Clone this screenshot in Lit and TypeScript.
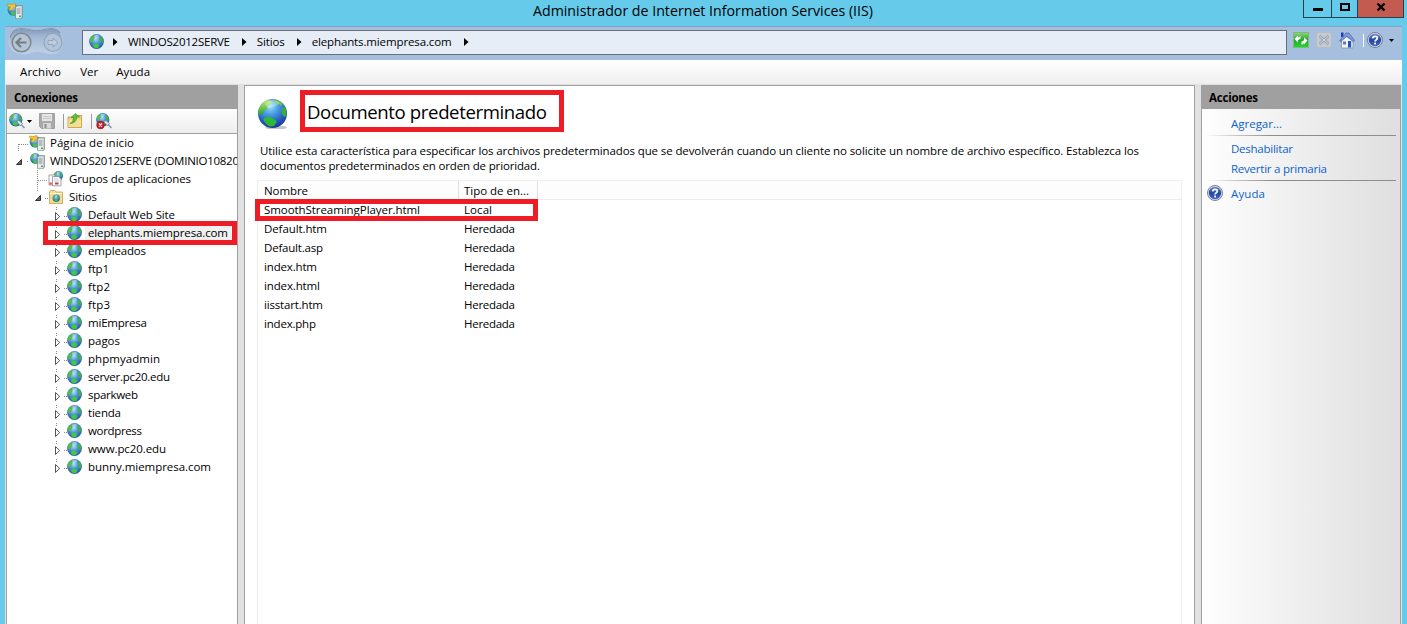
import { LitElement, html, svg, css } from "lit";
import { customElement, property } from "lit/decorators.js";

/** A single line of text spaced out to a given width. */
@customElement("fit-label")
class FitLabel extends LitElement {
  @property() text = "";
  @property({ type: Number }) w = 0;
  static styles = css`
    :host { display: block; flex: none; white-space: pre; }
    .t { display: inline-block; }
  `;
  firstUpdated() {
    const el = this.renderRoot.querySelector(".t") as HTMLElement;
    const natural = el.getBoundingClientRect().width;
    const n = this.text.length - 1;
    if (this.w && n > 0) el.style.letterSpacing = `${(this.w - natural) / n}px`;
  }
  render() {
    return html`<span class="t">${this.text}</span>`;
  }
}

const label = (text: string, w: number, cls = "") =>
  html`<fit-label class=${cls} .text=${text} .w=${w}></fit-label>`;

const globeDefs = svg`
  <defs>
    <radialGradient id="sea" cx=".42" cy=".25" r=".78">
      <stop offset="0" stop-color="#9ce2fa"/><stop offset=".35" stop-color="#4a9fe2"/>
      <stop offset=".75" stop-color="#2458bc"/><stop offset="1" stop-color="#1b3486"/>
    </radialGradient>
    <linearGradient id="land" x1="0" y1="0" x2="0" y2="1">
      <stop offset="0" stop-color="#c2ea70"/><stop offset="1" stop-color="#28a428"/>
    </linearGradient>
  </defs>`;
const globeArt = svg`${globeDefs}
  <ellipse cx="19" cy="29.500" rx="11" ry="2" fill="#000" opacity=".22"/>
  <circle cx="15.500" cy="15.500" r="14.500" fill="url(#sea)"/>
  <path d="M1.500 13Q3 5 10 2L14 3L15 6L11 7L10 11L7 13L4 17L1.500 17Z" fill="url(#land)"/>
  <path d="M17 1.500Q23 2 26 6L24 8L20 5L17 4Z" fill="#6cc04c"/>
  <path d="M25 10L28 9Q30 13 29.500 18L27 19L24.500 15Z" fill="#3aae3a"/>
  <path d="M6 21L11 18.500L15 20L20 23.500L17 28L13 28.500Q9 27 6 21Z" fill="#2fb833"/>
  <path d="M8 6Q15 -1 23 5Q18 10 10 10Z" fill="#fff" opacity=".3"/>`;

const smallGlobeArt = svg`
  <defs>
    <radialGradient id="sea2" cx=".45" cy=".35" r=".7">
      <stop offset="0" stop-color="#a6dcf8"/><stop offset=".45" stop-color="#4a90d8"/>
      <stop offset="1" stop-color="#2a4c9c"/>
    </radialGradient>
  </defs>
  <circle cx="7.500" cy="7.500" r="7.400" fill="url(#sea2)"/>
  <path d="M1 5Q2 2 5.500 .8L6.500 2L5 4L4.500 6.500L3 8.500L1.500 8Z" fill="#58bc48"/>
  <path d="M10 1Q13 2.500 14.300 6L13.500 9.500L11.500 8L10.500 5L11.500 3.500Z" fill="#3fb23e"/>
  <path d="M4 10.500L7 9.500L10.500 11L9 14L6.500 14.300L4.500 13Z" fill="#3dcc3a"/>
  <path d="M5 2Q7 0 10 1.500Q10 4 6 5Z" fill="#fff" opacity=".35"/>`;

const globe = (s: number) => html`<svg class="ic" width=${s} height=${s} viewBox="0 0 31 31">${globeArt}</svg>`;
const smallGlobe = html`<svg class="ic" width="15" height="15" viewBox="0 0 15 15">${smallGlobeArt}</svg>`;

const serverArt = svg`
  <path d="M8.500 4L10.500 2.500H15.500V14L14.500 15.500H8.500Z" fill="#c6cbcf" stroke="#7f868b" stroke-width=".7"/>
  <path d="M9 4.300H14V15.200H9Z" fill="#e9ecee"/>
  <path d="M9.500 6H13.500M9.500 8H13.500M9.500 10H13.500" stroke="#777f86" stroke-width=".9"/>
  <rect x="12" y="12.500" width="2" height="1.600" fill="#42b82a"/>`;
const server = html`<svg class="ic" width="16" height="16" viewBox="0 0 16 16">
  <g transform="translate(1 0) scale(.72)">${smallGlobeArt}</g>${serverArt}</svg>`;
const startPage = html`<svg class="ic" width="16" height="16" viewBox="0 0 16 16">
  <g transform="translate(.5 1) scale(.78)">${smallGlobeArt}</g>
  <path d="M.5 1L4 1.500L8 .5L8.500 5.500L6.500 4.500L4 7.500L2 6L3.800 3.800L1 3.500Z" fill="#f8c63a" stroke="#cc9014" stroke-width=".6"/>${serverArt}</svg>`;
const pools = html`<svg class="ic" width="16" height="16" viewBox="0 0 16 16">
  <g transform="translate(5.500 0) scale(.64)">${smallGlobeArt}</g>
  <path d="M1 4H7V14H1Z" fill="#fff" stroke="#9b8585" stroke-width=".8"/>
  <path d="M4.500 5.500H10.500L13 8V14.800H4.500Z" fill="#fff" stroke="#858c96" stroke-width=".8"/>
  <path d="M6 8H10M6 10H11.500" stroke="#a3b0bd" stroke-width=".7"/>
  <path d="M1.500 11.500H3.800V13.500H1.500Z" fill="#d84e48"/><path d="M7 11.500H10.500V13.500H7Z" fill="#c94035"/></svg>`;
const sitesFolder = html`<svg class="ic" width="16" height="16" viewBox="0 0 16 16">
  <path d="M1.500 3L2.500 1.500H7L8 3H14.500V14.500H1.500Z" fill="#f3dc8e" stroke="#c2a258" stroke-width=".8"/>
  <path d="M2 4.500H14" stroke="#fff5cd"/><g transform="translate(4.500 5.500) scale(.5)">${smallGlobeArt}</g></svg>`;

const plug = svg`<path d="M7.500 8.500L10 7.500L13.500 10.500L11.500 13Z" fill="#dde4e9" stroke="#6e7c88" stroke-width=".7"/>
  <path d="M12 11.500L15.500 15" stroke="#8897a3" stroke-width="1.600"/>`;
const connect = html`<svg class="ic" width="17" height="17" viewBox="0 0 17 17">
  <g transform="scale(.9)">${smallGlobeArt}</g>${plug}</svg>`;
const disconnect = html`<svg class="ic" width="17" height="17" viewBox="0 0 17 17">
  <g transform="scale(.9)">${smallGlobeArt}</g>${plug}
  <circle cx="4.500" cy="12" r="3.900" fill="#c7242c" stroke="#8d151b" stroke-width=".5"/>
  <path d="M3 10.500L6 13.500M6 10.500L3 13.500" stroke="#fff" stroke-width="1.300"/></svg>`;
const save = html`<svg class="ic" width="16" height="16" viewBox="0 0 16 16">
  <path d="M.5 .5H15.500V15.500H2.500L.5 13.500Z" fill="#a9a9a9" stroke="#a0a0a0"/>
  <rect x="3" y="1" width="10" height="7" fill="#e6e6e6"/><path d="M4 3.500H12M4 5.500H12" stroke="#c8c8c8"/>
  <rect x="4" y="10" width="8" height="5.500" fill="#d8d8d8"/><rect x="5.500" y="11" width="2" height="4" fill="#8d8d8d"/></svg>`;
const upFolder = html`<svg class="ic" width="16" height="16" viewBox="0 0 16 16">
  <path d="M1 4H8L9 2.500H14.500V14.500H1Z" fill="#efd073" stroke="#c4a24c" stroke-width=".9"/>
  <path d="M1.500 6.500H14V14H1.500Z" fill="#f6df91"/>
  <path d="M3 10.500Q6.500 9.500 6.500 4.500H4L8.500 .5L12.500 4H9.800Q9.500 10 3 10.500Z" fill="#5cc233" stroke="#37892b" stroke-width=".6"/></svg>`;
const help = html`<svg class="ic" width="16" height="16" viewBox="0 0 16 16">
  <defs><linearGradient id="hb" x1="0" y1="0" x2="0" y2="1"><stop offset="0" stop-color="#6a88d2"/><stop offset=".5" stop-color="#2647a0"/><stop offset="1" stop-color="#3d68c8"/></linearGradient></defs>
  <circle cx="8" cy="8" r="7.500" fill="#dfe3ec" stroke="#6a7284" stroke-width=".9"/>
  <circle cx="8" cy="8" r="6.200" fill="url(#hb)"/>
  <path d="M5.700 6.300Q5.900 4.300 8.100 4.300Q10.400 4.300 10.300 6.100Q10.200 7.200 9 7.900Q8.100 8.400 8.100 9.500" fill="none" stroke="#fff" stroke-width="1.700"/>
  <rect x="7.200" y="10.600" width="1.800" height="1.800" fill="#fff"/></svg>`;
const refresh = html`<svg class="ic" width="16" height="16" viewBox="0 0 16 16">
  <defs><linearGradient id="rg" x1="0" y1="0" x2="0" y2="1"><stop offset="0" stop-color="#8fd878"/><stop offset=".5" stop-color="#22a828"/><stop offset="1" stop-color="#1fdc2a"/></linearGradient></defs>
  <rect x=".5" y=".5" width="15" height="15" fill="url(#rg)" stroke="#86b487"/>
  <path d="M1.500 7L5 3.500V5.500L7.500 4V7Q5.500 7 5 8.500V10.500Z" fill="#fff"/>
  <path d="M14.500 8.500L11 5.500V7.500Q11 9.500 8.500 9.500V12.500Q10.500 12.500 11 11V12.500Z" fill="#fff"/></svg>`;
const stop = html`<svg class="ic" width="16" height="16" viewBox="0 0 16 16">
  <rect x=".5" y=".5" width="15" height="15" fill="#c3cad2" stroke="#b4bdc9"/>
  <path d="M3.500 4L12.500 12M12.500 4L3.500 12" stroke="#929ca7" stroke-width="2.400"/><path d="M3.500 4L12.500 12M12.500 4L3.500 12" stroke="#dce0e5" stroke-width="1"/></svg>`;
const home = html`<svg class="ic" width="16" height="17" viewBox="0 0 16 17">
  <path d="M2.500 8.500L7 4.500L14 9V16H2.500Z" fill="#f0f3f8" stroke="#8c93a0" stroke-width=".8"/>
  <path d="M2 .5H4.500V5H2Z" fill="#2038c4"/>
  <path d="M.5 8.800L7 1L10 1L15.500 8.500L14 9.500L8 4L2 9.500Z" fill="#7f9ad6" stroke="#3c55a5" stroke-width=".6"/>
  <rect x="4" y="9.500" width="3" height="3" fill="#5f7fae"/><rect x="9" y="9" width="3.200" height="6.500" fill="#2557b0"/></svg>`;
const navPad = html`<svg class="nav" width="58" height="30" viewBox="0 0 58 30">
  <defs><linearGradient id="np" x1="0" y1="0" x2="0" y2="1"><stop offset="0" stop-color="#7f99b9"/><stop offset=".35" stop-color="#a3bad4"/><stop offset="1" stop-color="#c0d2e8"/></linearGradient></defs>
  <path d="M14 1.500Q19 1.500 24 3Q29 4.500 35 3Q40 1.500 45 1.500Q56 3 56 14Q55 27 44 27Q38 26 33 24.500Q28 24 24 25.500Q19 28 14 27Q2 25 2 14Q2 3 14 1.500Z" fill="url(#np)" stroke="#b9cbe2"/>
  <path d="M3 11Q5 2 14 1.500Q19 1.500 24 3Q29 4.500 35 3Q40 1.500 45 1.500Q50 2 53 6" fill="none" stroke="#7d92ad" stroke-width="1.200"/>
  <circle cx="14.500" cy="15.500" r="9.300" fill="#b4c5d8" stroke="#84898e" stroke-width="1.600"/>
  <path d="M19.500 15.500H10M14 11L9.500 15.500L14 20" fill="none" stroke="#777c80" stroke-width="2.200"/>
  <circle cx="46" cy="15.500" r="9" fill="#b1c5dd" stroke="#95a4b5" stroke-width="1.200"/>
  <path d="M41 13.500H46V11L51 15.500L46 20V17.500H41Z" fill="#bccde1" stroke="#96a4b5"/></svg>`;

const crumbArrow = html`<svg class="ic" width="5" height="8" viewBox="0 0 5 8"><path d="M0 0L4.500 4L0 8Z" fill="#000"/></svg>`;
const caret = html`<svg class="ic" width="5" height="3" viewBox="0 0 5 3"><path d="M0 0H5L2.500 3Z" fill="#000"/></svg>`;

type Kind = "start" | "server" | "pools" | "folder" | "site";
interface TreeItem { kind: Kind; text: string; w: number; selected?: boolean }

const tree: TreeItem[] = [
  { kind: "start", text: "Página de inicio", w: 84 },
  { kind: "server", text: "WINDOS2012SERVE (DOMINIO10820", w: 189 },
  { kind: "pools", text: "Grupos de aplicaciones", w: 122 },
  { kind: "folder", text: "Sitios", w: 28 },
  { kind: "site", text: "Default Web Site", w: 87 },
  { kind: "site", text: "elephants.miempresa.com", w: 140, selected: true },
  { kind: "site", text: "empleados", w: 58 },
  { kind: "site", text: "ftp1", w: 21 },
  { kind: "site", text: "ftp2", w: 22 },
  { kind: "site", text: "ftp3", w: 22 },
  { kind: "site", text: "miEmpresa", w: 59 },
  { kind: "site", text: "pagos", w: 32 },
  { kind: "site", text: "phpmyadmin", w: 72 },
  { kind: "site", text: "server.pc20.edu", w: 82 },
  { kind: "site", text: "sparkweb", w: 50 },
  { kind: "site", text: "tienda", w: 33 },
  { kind: "site", text: "wordpress", w: 54 },
  { kind: "site", text: "www.pc20.edu", w: 78 },
  { kind: "site", text: "bunny.miempresa.com", w: 123 },
];

const dots = (d: string) => svg`<path d=${d} stroke="#8a8a8a" stroke-dasharray="1 1" fill="none"/>`;
const openTri = (x: number) => svg`<path d="M${x + 4.5} 7.500V12.500H${x - 0.5}Z" fill="#6a6a6a" stroke="#333"/>`;
const guides = {
  start: { w: 22, art: dots("M12 10.500H22M11.500 10V18") },
  server: { w: 22, art: svg`${dots("M20 9.500H22")}${openTri(10)}` },
  pools: { w: 41, art: dots("M30.500 0V18M31 10.500H41") },
  folder: { w: 41, art: svg`${dots("M38 10.500H41M30.500 0V4")}${openTri(29)}` },
  site: { w: 60, art: svg`${dots("M57 10.500H60M49.500 1V4")}<path d="M48.500 6.500L52.700 10.500L48.500 14.500Z" fill="#fff" stroke="#555"/>` },
};
const icons = { start: startPage, server, pools, folder: sitesFolder, site: smallGlobe };

const docs: [string, number, string, number][] = [
  ["SmoothStreamingPlayer.html", 156, "Local", 28],
  ["Default.htm", 63, "Heredada", 51],
  ["Default.asp", 59, "Heredada", 51],
  ["index.htm", 53, "Heredada", 51],
  ["index.html", 56, "Heredada", 51],
  ["iisstart.htm", 59, "Heredada", 51],
  ["index.php", 52, "Heredada", 51],
];

@customElement("app-root")
class AppRoot extends LitElement {
  static styles = css`
    :host {
      display: flex; flex-direction: column; box-sizing: border-box; width: 1407px; height: 624px;
      overflow: hidden; background: #66caea; color: #000;
      font: 11.5px/18px "Open Sans", "Noto Sans", sans-serif;
    }
    * { box-sizing: border-box; }
    .ic, .nav { display: block; flex: none; }
    .title { display: flex; height: 26px; flex: none; align-items: flex-start; }
    .title .app { padding: 3px 0 0 7px; width: 533px; }
    .title .name { font-size: 14.2px; line-height: 22px; }
    .wbtns { display: flex; margin-left: auto; margin-right: 3px; height: 18px; border: 1px solid #24414e; border-top: 0; }
    .wb { display: flex; align-items: center; justify-content: center; width: 28px; border-right: 1px solid #24414e; }
    .wb.max { width: 26px; }
    .wb.close { width: 45px; background: #c45b51; border: 0; }
    .wb svg { margin-top: -3px; }
    .frame { display: flex; flex-direction: column; flex: 1; margin: 0 5px; min-height: 0; background: #e1e1e1; }
    .nav-row { display: flex; height: 34px; flex: none; background: #a6bfde; border-top: 1px solid #84a4bd; padding-left: 2px; }
    .nav { margin-top: 0; }
    .addr { display: flex; align-items: center; width: 1205px; height: 25px; margin: 3px 0 0 17px; background: #e6edf6; border: 1px solid #696f79; padding-left: 6px; }
    .addr fit-label { margin: 0 12px 2px 10px; }
    .addr .ic { margin-bottom: 1px; }
    .addr .ic:first-child { margin-bottom: 3px; }
    .addr .ic + .ic { margin-left: 9px; }
    .tools { display: flex; align-items: flex-start; padding: 5px 0 0 6px; gap: 7px; }
    .tools .sep { width: 1px; height: 13px; background: #fff; margin: 2px -4px 0 1px; }
    .tools .ic:last-child { margin: 7px 0 0 -1px; }
    .menu { display: flex; height: 24px; flex: none; padding: 3px 0 0 15px; background: linear-gradient(#fff, #efefef); gap: 18px; }
    .menu fit-label:first-child { margin-right: 1px; }
    .body { display: flex; flex: 1; min-height: 0; padding: 1px 1px 0; gap: 6px; }
    .panel { display: flex; flex-direction: column; flex: none; border: 1px solid #a0a0a0; border-bottom: 0; overflow: hidden; }
    .left { width: 232px; background: #fff; position: relative; }
    .center { width: 951px; background: #fff; position: relative; }
    .right { width: 200px; background: linear-gradient(90deg, #fefefe, #e0e0e0 95%); }
    .head { height: 23px; flex: none; background: #a0a0a0; font-weight: 700; padding: 2px 0 0 7px; line-height: 19px; }
    .bar { display: flex; align-items: flex-start; height: 25px; flex: none; background: linear-gradient(#fdfdfd, #ededed); border-bottom: 1px solid #a0a0a0; padding: 4px 0 0 2px; }
    .bar .caret { padding: 7px 7px 0 1px; }
    .bar .sep { width: 1px; height: 15px; margin: 1px 4px 0 8px; background: #9b9b9b; }
    .bar .s1 { margin-right: 3px; }
    .row { display: flex; height: 18px; flex: none; }
    .row .ico { width: 16px; margin-right: 2px; padding-top: 1px; }
    .row fit-label { padding: 0 3px; }
    .row .sel { background: #f0f0f0; }
    .mark { position: absolute; border: 5px solid #ee1c25; }
    .m-tree { left: 36px; top: 135px; width: 194px; height: 24px; }
    .m-title { left: 55px; top: 4px; width: 264px; height: 42px; }
    .m-row { left: 10px; top: 113px; width: 283px; height: 22px; }
    .hero { display: flex; height: 56px; flex: none; padding: 12px 0 0 12px; gap: 19px; }
    .hero fit-label { font-size: 18.6px; line-height: 27px; }
    .desc { padding: 1px 0 0 15px; height: 38px; flex: none; line-height: 15px; }
    .grid { display: flex; flex-direction: column; flex: 1; margin: 0 12px 0 12px; border: 1px solid #efefef; border-bottom: 0; }
    .ghead { display: flex; height: 19px; flex: none; line-height: 19px; background: #fdfdfd; border-bottom: 1px solid #ececec; }
    .c1 { width: 200px; padding-left: 6px; }
    .c2 { width: 80px; padding-left: 6px; }
    .ghead .c1, .ghead .c2 { border-right: 1px solid #e0e0e0; }
    .ghead .c1 { width: 201px; }
    .ghead .c2 { width: 79px; padding-left: 5px; }
    .grow { display: flex; height: 19px; line-height: 19px; }
    .acts { padding: 5px 4px 0 3px; color: #0d62cd; }
    .act { display: flex; height: 20px; padding: 1px 0 0 26px; line-height: 18px; }
    .act.h { padding-left: 2px; gap: 8px; }
    .rule { height: 1px; margin: 1px 0 3px; background: linear-gradient(90deg, transparent, #8d8d8d 35%, #8d8d8d); }
  `;

  render() {
    return html`
      <div class="title">
        <div class="app">${startPage}</div>
        ${label("Administrador de Internet Information Services (IIS)", 340, "name")}
        <div class="wbtns">
          <div class="wb"><svg width="10" height="12"><rect y="7" width="10" height="3" /></svg></div>
          <div class="wb max"><svg width="10" height="12"><rect x="1" y="3" width="8" height="6" fill="none" stroke="#000" stroke-width="2" /></svg></div>
          <div class="wb close"><svg width="10" height="12"><path d="M1.500 2.500L8.500 9.500M8.500 2.500L1.500 9.500" stroke="#000" stroke-width="2.400" /></svg></div>
        </div>
      </div>
      <div class="frame">
        <div class="nav-row">
          ${navPad}
          <div class="addr">
            ${smallGlobe}${crumbArrow}${label("WINDOS2012SERVE", 102)}${crumbArrow}${label("Sitios", 28)}${crumbArrow}${label("elephants.miempresa.com", 140)}${crumbArrow}
          </div>
          <div class="tools">${refresh}${stop}${home}<div class="sep"></div>${help}${caret}</div>
        </div>
        <div class="menu">${label("Archivo", 41)}${label("Ver", 18)}${label("Ayuda", 34)}</div>
        <div class="body">
          <div class="panel left">
            <div class="head">${label("Conexiones", 64)}</div>
            <div class="bar">
              ${connect}<div class="caret">${caret}</div>${save}
              <div class="sep s1"></div>${upFolder}<div class="sep"></div>${disconnect}
            </div>
            ${tree.map((n) => html`<div class="row">
              <svg class="ic" width=${guides[n.kind].w} height="18">${guides[n.kind].art}</svg>
              <div class="ico">${icons[n.kind]}</div>
              ${label(n.text, n.w, n.selected ? "sel" : "")}
            </div>`)}
            <div class="mark m-tree"></div>
          </div>
          <div class="panel center">
            <div class="hero">${globe(31)}${label("Documento predeterminado", 240)}</div>
            <div class="desc">
              ${label("Utilice esta característica para especificar los archivos predeterminados que se devolverán cuando un cliente no solicite un nombre de archivo específico. Establezca los", 879)}
              ${label("documentos predeterminados en orden de prioridad.", 280)}
            </div>
            <div class="grid">
              <div class="ghead"><div class="c1">${label("Nombre", 44)}</div><div class="c2">${label("Tipo de en...", 65)}</div></div>
              ${docs.map(([a, aw, b, bw]) => html`<div class="grow"><div class="c1">${label(a, aw)}</div><div class="c2">${label(b, bw)}</div></div>`)}
            </div>
            <div class="mark m-title"></div>
            <div class="mark m-row"></div>
          </div>
          <div class="panel right">
            <div class="head">${label("Acciones", 49)}</div>
            <div class="acts">
              <div class="act">${label("Agregar...", 51)}</div>
              <div class="rule"></div>
              <div class="act">${label("Deshabilitar", 62)}</div>
              <div class="act">${label("Revertir a primaria", 96)}</div>
              <div class="rule"></div>
              <div class="act h">${help}${label("Ayuda", 34)}</div>
            </div>
          </div>
        </div>
      </div>
    `;
  }
}
